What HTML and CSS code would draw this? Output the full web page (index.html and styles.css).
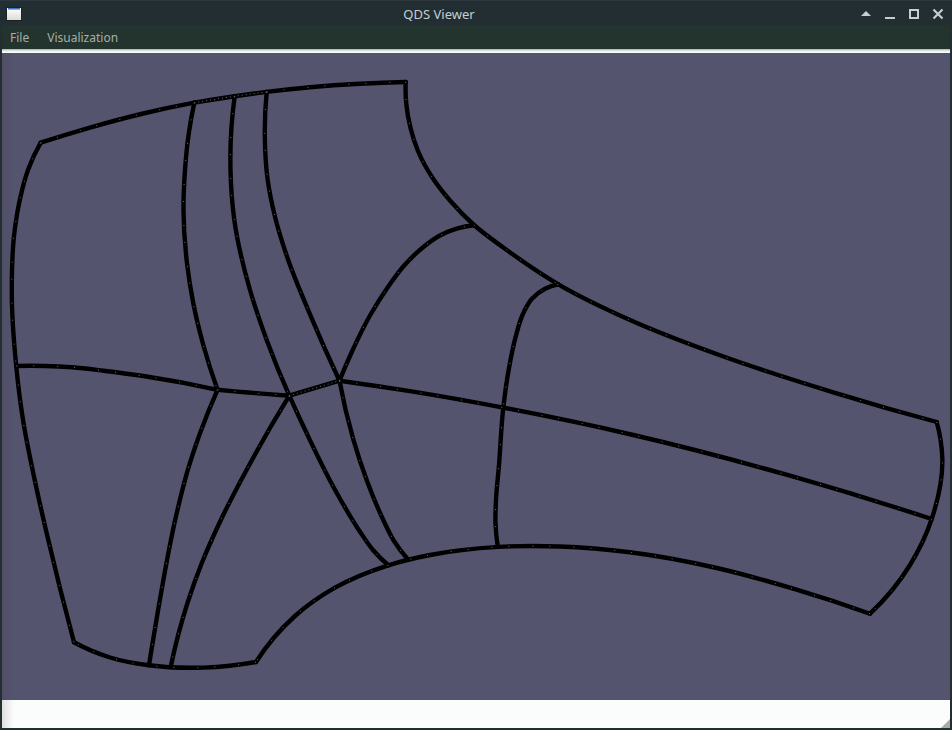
FILE: index.html
```html
<!DOCTYPE html>
<html lang="en">
<head>
<meta charset="utf-8">
<title>QDS Viewer</title>
<link rel="stylesheet" href="styles.css">
</head>
<body>
<div class="window">
  <header class="titlebar">
    <svg class="app-icon" width="16" height="14" viewBox="0 0 16 14" aria-hidden="true">
      <defs>
        <linearGradient id="page" x1="0" y1="0" x2="0" y2="1">
          <stop offset="0" stop-color="#ffffff"/>
          <stop offset="1" stop-color="#dcddd6"/>
        </linearGradient>
      </defs>
      <rect x="0" y="0" width="16" height="14" fill="#11181a" opacity=".5"/>
      <rect x="1" y="1" width="14" height="12" fill="url(#page)"/>
      <rect x="2" y="1" width="12" height="1" fill="#3f74c0"/>
      <rect x="2" y="2" width="12" height="1" fill="#8fb0dc"/>
    </svg>
    <h1 class="title">QDS Viewer</h1>
    <div class="controls">
      <button class="control" type="button" aria-label="Shade">
        <svg width="12" height="12" viewBox="0 0 12 12"><path d="M1 8L6 3L11 8Z" fill="currentColor"/></svg>
      </button>
      <button class="control" type="button" aria-label="Minimize">
        <svg width="12" height="12" viewBox="0 0 12 12"><path d="M1 9H11V11H1Z" fill="currentColor"/></svg>
      </button>
      <button class="control" type="button" aria-label="Maximize">
        <svg width="12" height="12" viewBox="0 0 12 12"><path d="M2 2H10V10H2Z" fill="none" stroke="currentColor" stroke-width="2"/></svg>
      </button>
      <button class="control" type="button" aria-label="Close">
        <svg width="12" height="12" viewBox="0 0 12 12"><path d="M1.5 1.5L10.5 10.5M10.5 1.5L1.5 10.5" fill="none" stroke="currentColor" stroke-width="2.2"/></svg>
      </button>
    </div>
  </header>
  <nav class="menubar">
    <button class="menu" type="button">File</button>
    <button class="menu" type="button">Visualization</button>
  </nav>
  <div class="divider"></div>
  <main class="view">
    <svg class="mesh" id="mesh" viewBox="2 53 948 647" role="img" aria-label="Quad mesh"></svg>
  </main>
  <footer class="statusbar">
    <svg class="grip" width="9" height="9" viewBox="0 0 9 9" aria-hidden="true"><path d="M9 0V9H0Z" fill="#a9abaa"/></svg>
  </footer>
</div>
<script src="mesh.js"></script>
</body>
</html>
```
FILE: styles.css
```css
* {
  box-sizing: border-box;
}

body {
  margin: 0;
  font-family: "Noto Sans", sans-serif;
  font-size: 12px;
  line-height: 16px;
  background: #232e32;
}

button {
  margin: 0;
  padding: 0;
  border: 0;
  background: none;
  font: inherit;
  color: inherit;
}

.window {
  display: flex;
  flex-direction: column;
  height: 100vh;
  padding: 0 2px 2px;
  background: #232e32;
}

.titlebar {
  display: flex;
  align-items: center;
  height: 25px;
  margin: 0 -2px;
  padding: 1px 8px 0 6px;
  border-top: 1px solid #2c383d;
  color: #c3cfd1;
}

.app-icon {
  display: block;
}

.title {
  flex: 1;
  margin: 0;
  font-size: 13px;
  font-weight: 400;
  line-height: 16px;
  text-align: center;
}

.controls {
  display: flex;
  gap: 12px;
  margin-left: 4px;
}

.control {
  width: 12px;
  height: 12px;
}

.control svg {
  display: block;
}

.menubar {
  display: flex;
  align-items: center;
  gap: 18px;
  height: 24px;
  padding: 2px 8px 0;
  background: #23332d;
  color: #a5afa9;
}

.divider {
  height: 4px;
  background: linear-gradient(#a7aba7, #e0e3e0 40%, #fbfdfc 75%);
}

.view {
  flex: 1;
  min-height: 0;
  background: linear-gradient(90deg, #4f4e65, #55546f 12px);
}

.mesh {
  display: block;
  width: 100%;
  height: 100%;
}

.edge {
  fill: none;
  stroke: #000;
  stroke-width: 4.4;
  stroke-linejoin: round;
  stroke-linecap: round;
}

.seam {
  fill: none;
  stroke: #6d6c85;
  stroke-width: 1;
  stroke-dasharray: 1 16 1 23;
}

.seam.dense {
  stroke-dasharray: 1 3;
}

.statusbar {
  display: flex;
  justify-content: flex-end;
  align-items: flex-end;
  height: 28px;
  background: linear-gradient(90deg, #dfdfde, #fbfdfc 12px);
}
```
FILE: mesh.js
```js
// Each edge is a list of x,y samples; a smooth curve is drawn through them.
const edges = [
  "40.7,142.7 90,127.6 143.3,113.5 194.3,102.7",
  "194.3,102.7 234.7,96.3 266.7,91.9",
  "266.7,91.9 310,87.2 360,83.7 405.7,82",
  "405.7,82 406.2,103 410.5,128 418,151 433.3,179 450,200.5 474,225 503.3,247.5 558.3,284.3 630,320 720,355.3 833.3,392.3 936.7,422",
  "936.7,422 942.3,458 931.7,519 910,565 870,613.7",
  "870,613.7 793.3,588.7 716.7,568 630,552.3 560,546.5 498.3,546.9 430,555 388.3,565.3 335,587.7 295,616 256,662",
  "256,662 203.3,667.6 149,665.3 110,657.5 74,642.3",
  "74,642.3 46.7,533.3 34.7,480 23.3,421.7 16.2,366 11.8,293.3 14.7,230 20,199 28,170 40.7,142.7",
  "16.2,366 45,366 71.7,367.3 103.3,370.7 143.3,376 217.5,389.8",
  "217.5,389.8 248,392.5 289.3,395.7",
  "289.3,395.7 339.5,380.7",
  "339.5,380.7 410,391.2 503.3,407.7 633.3,435 790,475.7 931.7,519",
  "194.3,102.7 188.7,134 185,170 183.5,210 187,263.3 193.3,303.3 203.3,345 217.5,389.8",
  "234.7,96.3 231.5,126.7 230.5,170 234.3,220 250,290 266.7,340 289.3,395.7",
  "289.3,395.7 306.7,433.3 333.3,486.7 360,531.7 373,550 388.3,565.3",
  "266.7,91.9 264.8,135 267.7,180 275,216.7 287.5,258 310,314.3 339.5,380.7",
  "339.5,380.7 353.3,439.3 367.3,481.7 383.3,520 394,541 408.3,559.7",
  "339.5,380.7 352,351.5 370,315.5 388.3,286.5 403.3,266.5 421,249 439,236 456.7,228.7 474,225.3",
  "558.3,284.3 545,288.7 531.7,299 522.5,315 515.7,336.7 509,368 503.3,407.7 499,465 496,500 495.5,523.3 497.7,546",
  "217.5,389.8 200,433.3 187.3,471.7 176.7,513.3 157,616.7 149,665.3",
  "289.3,395.7 248.3,466.7 220,521.7 201.7,563.3 187.8,602 170.7,667"
];

// Short edges where the segment seams are closest together.
const denseEdges = new Set([1, 10]);

// Tangents weigh both neighbouring spans, so uneven samples stay smooth.
function curve(text) {
  const p = text.split(" ").map(s => s.split(",").map(Number));
  const n = p.length - 1;
  const h = [];
  const v = [];
  for (let i = 0; i < n; i++) {
    const dx = p[i + 1][0] - p[i][0];
    const dy = p[i + 1][1] - p[i][1];
    h[i] = Math.hypot(dx, dy);
    v[i] = [dx / h[i], dy / h[i]];
  }
  const m = [];
  for (let i = 1; i < n; i++) {
    m[i] = [0, 1].map(k => (v[i - 1][k] * h[i] + v[i][k] * h[i - 1]) / (h[i - 1] + h[i]));
  }
  m[0] = n > 1 ? [0, 1].map(k => 2 * v[0][k] - m[1][k]) : v[0];
  m[n] = n > 1 ? [0, 1].map(k => 2 * v[n - 1][k] - m[n - 1][k]) : v[0];

  let d = "M" + p[0];
  for (let i = 0; i < n; i++) {
    const c1 = [0, 1].map(k => (p[i][k] + m[i][k] * h[i] / 3).toFixed(2));
    const c2 = [0, 1].map(k => (p[i + 1][k] - m[i + 1][k] * h[i] / 3).toFixed(2));
    d += " C" + c1 + " " + c2 + " " + p[i + 1];
  }
  return d;
}

const mesh = document.getElementById("mesh");

function draw(d, className) {
  const path = document.createElementNS("http://www.w3.org/2000/svg", "path");
  path.setAttribute("d", d);
  path.setAttribute("class", className);
  mesh.appendChild(path);
}

edges.forEach(e => draw(curve(e), "edge"));
edges.forEach((e, i) => draw(curve(e), denseEdges.has(i) ? "seam dense" : "seam"));
```
